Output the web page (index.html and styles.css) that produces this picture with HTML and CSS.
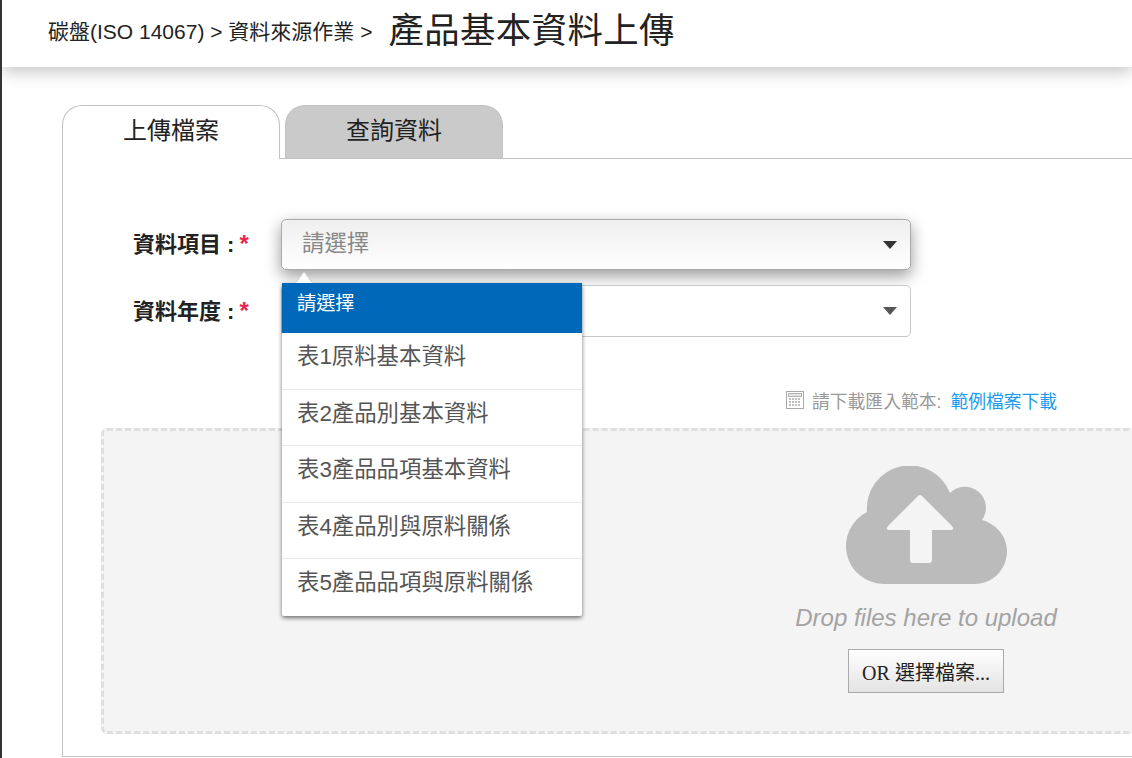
FILE: index.html
```html
<!DOCTYPE html>
<html lang="zh-Hant">
<head>
<meta charset="utf-8">
<title>產品基本資料上傳</title>
<link rel="stylesheet" href="styles.css">
</head>
<body>
<div class="page">
  <header class="topbar">
    <span class="crumbs">碳盤(ISO 14067) &gt; 資料來源作業 &gt;</span>
    <h1 class="title">產品基本資料上傳</h1>
  </header>
  <main class="content">
    <nav class="tabs">
      <div class="tab active">上傳檔案</div>
      <div class="tab">查詢資料</div>
    </nav>
    <section class="panel">
      <div class="form-row first">
        <label class="label">資料項目 :<em class="req">*</em></label>
        <div class="select open"><span class="placeholder">請選擇</span><i class="caret"></i></div>
      </div>
      <div class="form-row">
        <label class="label">資料年度 :<em class="req">*</em></label>
        <div class="select"><i class="caret soft"></i></div>
      </div>
      <div class="sample">
        <svg class="sample-icon" width="18" height="18" viewBox="0 0 18 18" aria-hidden="true">
          <rect x="0.5" y="0.5" width="17" height="17" fill="none" stroke="#a9a9a9"/>
          <rect x="2.5" y="2.5" width="13" height="3" fill="#e4e4e4" stroke="#b5b5b5"/>
          <path d="M3 8h12M3 11h12M3 14h12" stroke="#aaa" stroke-width="1.4" stroke-dasharray="2 1" fill="none"/>
        </svg>
        <span>請下載匯入範本:</span>
        <a class="sample-link" href="#">範例檔案下載</a>
      </div>
      <div class="dropzone">
        <svg class="cloud" width="162" height="119" viewBox="0 0 162 119" aria-hidden="true">
          <path fill="#bbbbbb" d="M38 118 A38 38 0 0 1 22 46 A43 43 0 0 1 105 27 A21 21 0 0 1 137 54 C151 58 162 70 162 85 C162 104 147 118 130 118 Z"/>
          <path fill="#f4f4f4" d="M73 30 Q75 28 77 30 L107 60 Q110 64 105 64 L87 64 L87 94 Q87 97 84 97 L68 97 Q65 97 65 94 L65 64 L45 64 Q40 64 43 60 Z"/>
        </svg>
        <p class="drop-text">Drop files here to upload</p>
        <button class="pick" type="button">OR 選擇檔案...</button>
      </div>
    </section>
    <div class="menu">
      <span class="menu-arrow"></span>
      <div class="option selected">請選擇</div>
      <div class="option">表1原料基本資料</div>
      <div class="option">表2產品別基本資料</div>
      <div class="option">表3產品品項基本資料</div>
      <div class="option">表4產品別與原料關係</div>
      <div class="option">表5產品品項與原料關係</div>
    </div>
  </main>
</div>
</body>
</html>
```
FILE: styles.css
```css
html, body {
  margin: 0;
  padding: 0;
  height: 100%;
  overflow: hidden;
  background: #fff;
}
* { box-sizing: border-box; }
body {
  font-family: "Liberation Sans", "Noto Sans CJK TC", sans-serif;
  color: #222;
}
.page {
  width: 1132px;
  height: 758px;
  border-left: 2px solid #333;
  overflow: hidden;
  position: relative;
}
.topbar {
  height: 67px;
  padding-left: 46px;
  display: flex;
  align-items: center;
  background: #fff;
  box-shadow: 0 4px 16px rgba(0, 0, 0, .25);
  position: relative;
  white-space: nowrap;
}
.crumbs {
  font-size: 21px;
  color: #222;
  margin-top: -8px;
}
.title {
  margin: -13px 0 0 16px;
  font-size: 35.4px;
  font-weight: 400;
  color: #222;
  letter-spacing: .4px;
}
.content {
  position: relative;
  padding: 38px 0 0 60px;
}
.tabs {
  display: flex;
  gap: 5px;
  height: 54px;
  position: relative;
  z-index: 1;
}
.tab {
  width: 218px;
  height: 53px;
  border: 1px solid #c2c2c2;
  border-bottom: 0;
  border-radius: 20px 20px 0 0;
  background: #cacaca;
  font-size: 24px;
  line-height: 50px;
  text-align: center;
  color: #222;
}
.tab.active {
  height: 54px;
  background: #fff;
}
.panel {
  width: 1760px;
  height: 599px;
  margin-top: -1px;
  border: 1px solid #c2c2c2;
  padding: 60px 0 0 38px;
}
.form-row {
  display: flex;
  align-items: center;
  height: 52px;
  margin-bottom: 14px;
}
.form-row.first { margin-bottom: 15px; height: 51px; }
.label {
  width: 180px;
  padding-left: 32px;
  font-size: 22px;
  font-weight: 700;
  color: #222;
  margin-top: -5px;
  white-space: nowrap;
}
.req {
  color: #e8264f;
  font-style: normal;
  font-size: 24px;
  margin-left: 5px;
}
.select {
  width: 630px;
  height: 100%;
  border: 1px solid #c8c8c8;
  border-radius: 5px;
  padding: 0 20px;
  display: flex;
  align-items: center;
  justify-content: space-between;
  background: #fff;
  position: relative;
}
.select.open {
  border-color: #aaa;
  background: linear-gradient(#efefef, #fff);
  box-shadow: 0 6px 16px rgba(0, 0, 0, .4);
}
.placeholder {
  font-size: 22.4px;
  color: #888;
  margin-top: -8px;
}
.caret {
  position: absolute;
  right: 13px;
  top: 50%;
  margin-top: -4px;
  width: 0;
  height: 0;
  border-left: 7px solid transparent;
  border-right: 7px solid transparent;
  border-top: 8px solid #333;
}
.caret.soft { border-top-color: #555; }
.sample {
  display: flex;
  align-items: center;
  height: 20px;
  margin: 0;
  position: relative;
  top: 39px;
  left: 685px;
  font-size: 17.8px;
  color: #999;
  white-space: nowrap;
}
.sample-icon { margin-right: 8px; }
.sample-link {
  color: #1a9bf0;
  text-decoration: none;
  margin-left: 9px;
}
.dropzone {
  width: 1650px;
  height: 306px;
  margin-top: 57px;
  border: 3px dashed #dfdfdf;
  border-radius: 6px;
  background: #f4f4f4;
  display: flex;
  flex-direction: column;
  align-items: center;
  padding-top: 35px;
}
.cloud { display: block; }
.drop-text {
  margin: 18px 0 0;
  font-size: 24px;
  line-height: 30px;
  font-style: italic;
  color: #a3a3a3;
  white-space: nowrap;
}
.pick {
  margin-top: 16px;
  width: 156px;
  height: 44px;
  border: 1px solid #aaa;
  background: linear-gradient(#fff, #e3e3e3);
  font-family: "Liberation Serif", "Noto Sans CJK TC", serif;
  font-size: 20px;
  color: #222;
  padding: 0;
  white-space: nowrap;
}
.menu {
  position: absolute;
  left: 280px;
  top: 216px;
  width: 300px;
  background: #fff;
  border-radius: 2px;
  box-shadow: 0 2px 4px rgba(0, 0, 0, .55);
  z-index: 5;
}
.menu-arrow {
  position: absolute;
  left: 14px;
  top: -11px;
  width: 0;
  height: 0;
  border-left: 8px solid transparent;
  border-right: 8px solid transparent;
  border-bottom: 11px solid #fff;
  filter: drop-shadow(0 -1px 0 #bbb);
}
.option {
  height: 56.5px;
  padding: 8px 15px 0;
  font-size: 22.4px;
  line-height: 32px;
  color: #555;
  border-bottom: 1px solid #e8e8e8;
  white-space: nowrap;
}
.option:last-child { border-bottom: 0; }
.option.selected {
  height: 50px;
  padding-top: 5px;
  font-size: 19.2px;
  color: #fff;
  background: #0068b8;
  border-bottom: 0;
}
```
